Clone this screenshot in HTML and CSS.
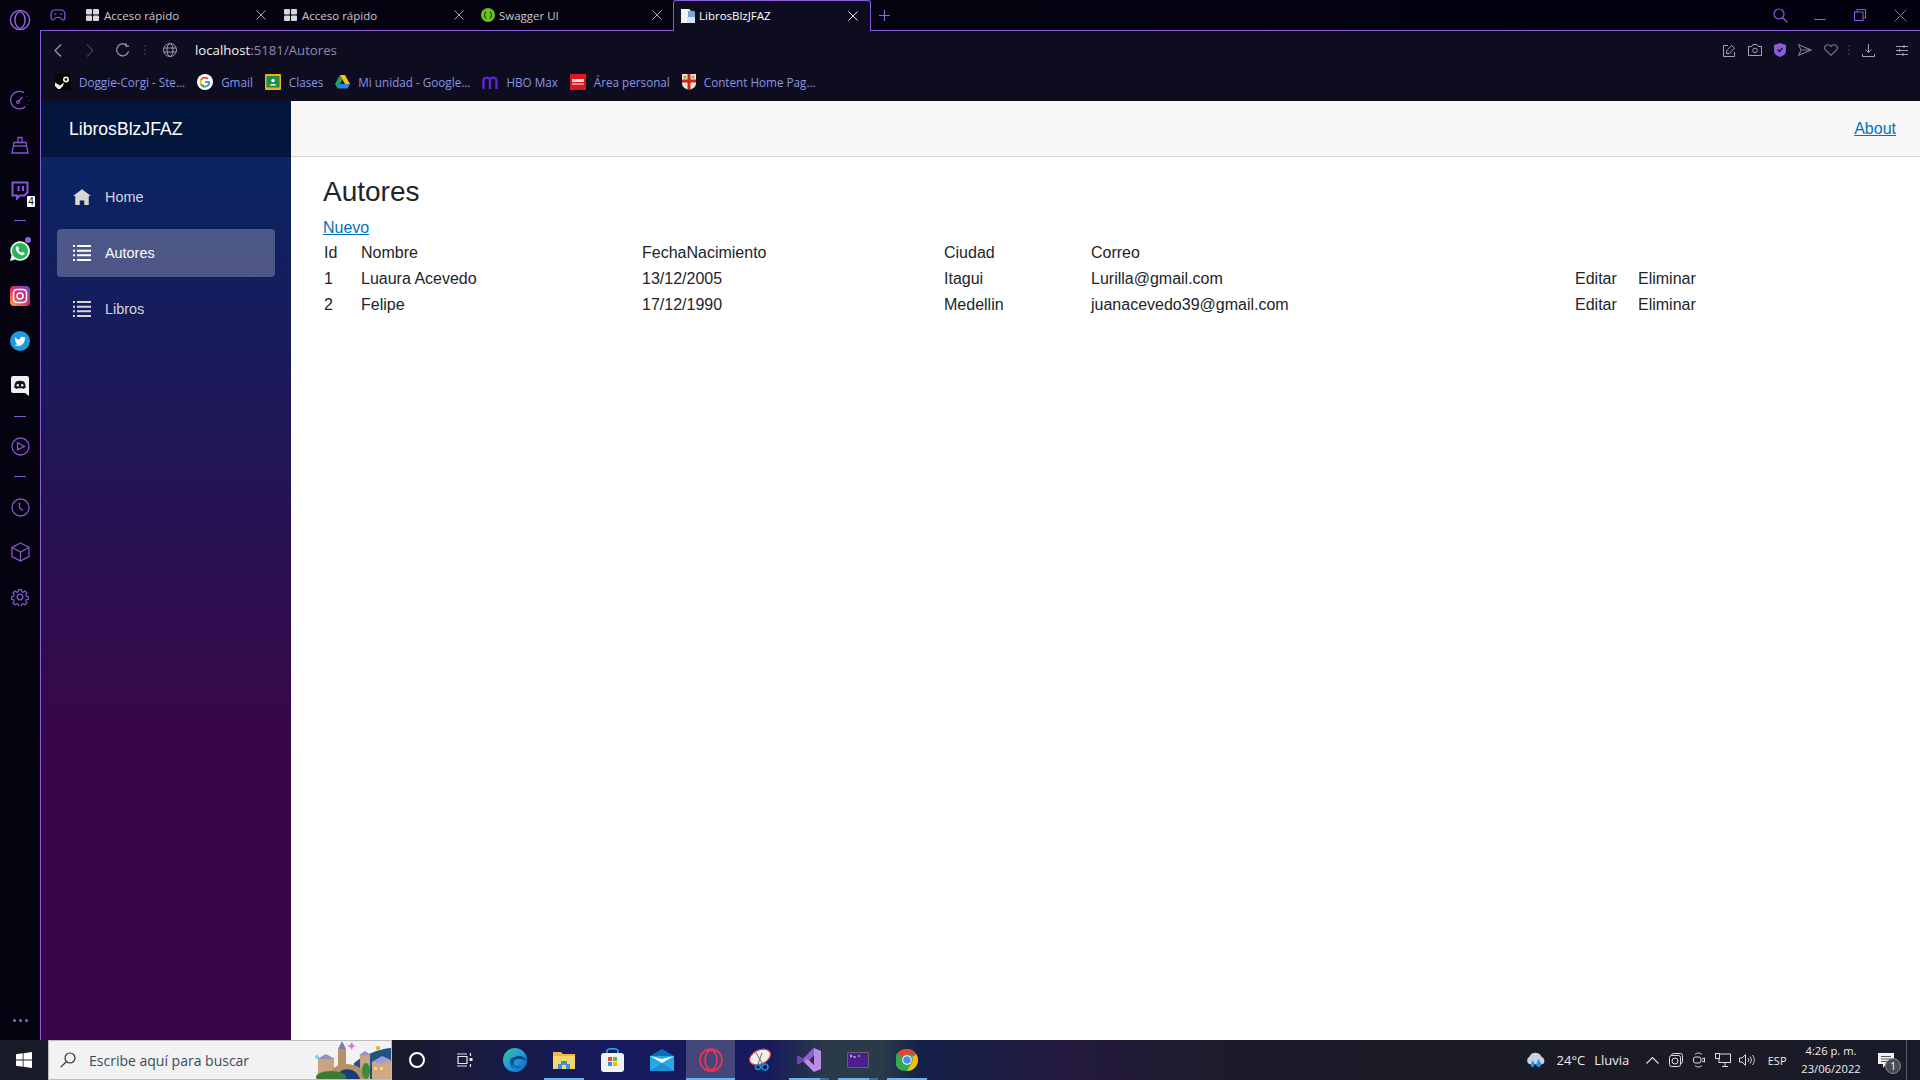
FILE: index.html
```html
<!DOCTYPE html>
<html lang="es">
<head>
<meta charset="utf-8">
<title>LibrosBlzJFAZ</title>
<link rel="stylesheet" href="styles.css">
</head>
<body>
<div class="desktop">
  <div class="window">
    <aside class="rail">
      <div class="rail-logo"><svg width="22" height="22" viewBox="0 0 22 22" fill="none" stroke="#8f63e0" stroke-width="1.4"><circle cx="11" cy="11" r="9.6"/><ellipse cx="11" cy="11" rx="5" ry="8.4"/></svg></div>
      <div class="rail-item"><svg width="20" height="20" viewBox="0 0 20 20" fill="none" stroke="#8457cf" stroke-width="1.3"><path d="M15.5 16.5A8.8 8.8 0 1 1 14 2.6"/><circle cx="8" cy="12" r="1.4"/><path d="M9 11l3.4-4"/><path d="M17 6v.6M18.5 10v.6M17.6 14v.6" stroke-width="1"/></svg></div>
      <div class="rail-item"><svg width="18" height="18" viewBox="0 0 18 18" fill="none" stroke="#8457cf" stroke-width="1.3"><path d="M7 1.5h4v5H7zM3 6.500h12l2 10.500H1z"/><path d="M3 10h12"/></svg></div>
      <div class="rail-item rail-badged"><svg width="18" height="19" viewBox="0 0 18 19"><path fill="none" stroke="#8457d6" stroke-width="2" d="M1.500 1.500h15v10l-3 3H9l-3 3v-3H1.500z"/><path fill="#8457d6" d="M6.500 5h2v5h-2zM11 5h2v5h-2z"/></svg><span class="rail-badge">4</span></div>
      <div class="rail-dash rail-dash-a"></div>
      <div class="rail-item rail-dot"><svg width="22" height="22" viewBox="0 0 22 22"><path fill="#e9f3e9" d="M1 21l1.500-5.400A9.800 9.800 0 1 1 6.300 19.500z"/><circle cx="11" cy="11" r="8" fill="#25b655"/><path fill="#fff" d="M7.500 6.500l1.500-.3 1.200 2.400-.9 1.100c.7 1.400 1.700 2.300 3 3l1.100-1 2.300 1.200-.2 1.400c-.6.8-1.600 1.100-2.700.9-3.100-.7-5.300-3.100-6-5.900-.2-1.100.1-2 .7-2.800z"/></svg><span class="rail-pip"></span></div>
      <div class="rail-item"><svg width="20" height="20" viewBox="0 0 20 20"><defs><linearGradient id="ig" x1="0" y1="1" x2="1" y2="0"><stop offset="0" stop-color="#f9b233"/><stop offset=".45" stop-color="#e1306c"/><stop offset="1" stop-color="#5b4fc9"/></linearGradient></defs><rect width="20" height="20" rx="4" fill="url(#ig)"/><rect x="3.500" y="3.500" width="13" height="13" rx="3.500" fill="none" stroke="#fff" stroke-width="1.500"/><circle cx="10" cy="10" r="3" fill="none" stroke="#fff" stroke-width="1.500"/></svg></div>
      <div class="rail-item"><svg width="20" height="20" viewBox="0 0 20 20"><circle cx="10" cy="10" r="10" fill="#1d9ae0"/><path fill="#fff" d="M15.500 6.800c-.4.200-.8.300-1.300.4.500-.3.800-.7 1-1.200-.4.300-.9.500-1.400.600a2.300 2.300 0 0 0-3.900 2.100c-1.900-.1-3.600-1-4.700-2.400-.6 1-.3 2.300.7 3-.4 0-.7-.1-1-.3 0 1.100.8 2 1.800 2.300-.3.100-.7.100-1 0 .3.900 1.100 1.600 2.100 1.600-1 .8-2.200 1.100-3.400 1 3.900 2.500 10.300.8 10.500-6.300.5-.3.9-.8 1.300-1.300z"/></svg></div>
      <div class="rail-item"><svg width="18" height="20" viewBox="0 0 18 20"><path fill="#efefef" d="M2 0h14a2 2 0 0 1 2 2v18l-4-3H2a2 2 0 0 1-2-2V2a2 2 0 0 1 2-2z"/><path fill="#14121f" d="M5 5.500c2.500-1 5.500-1 8 0 1.200 1.900 1.800 4 1.700 6-1 .8-2 1.200-3 1.400l-.7-1c-1.300.3-2.700.3-4 0l-.7 1c-1-.2-2-.6-3-1.400-.1-2 .5-4.100 1.700-6z"/><circle cx="6.800" cy="9.300" r="1.200" fill="#efefef"/><circle cx="11.200" cy="9.300" r="1.200" fill="#efefef"/></svg></div>
      <div class="rail-dash rail-dash-b"></div>
      <div class="rail-item rail-play"><svg width="19" height="19" viewBox="0 0 19 19" fill="none" stroke="#8457cf" stroke-width="1.300"><circle cx="9.500" cy="9.500" r="8.500"/><path d="M6.500 5.800l7 3.700-7 3.200z"/></svg></div>
      <div class="rail-dash rail-dash-c"></div>
      <div class="rail-item"><svg width="19" height="19" viewBox="0 0 19 19" fill="none" stroke="#8457cf" stroke-width="1.300"><circle cx="9.500" cy="9.500" r="8.500"/><path d="M8.500 4.500v5.500l3.500 2.500"/></svg></div>
      <div class="rail-item"><svg width="19" height="20" viewBox="0 0 19 20" fill="none" stroke="#8457cf" stroke-width="1.300"><path d="M9.500 1L18 5.500v9L9.500 19 1 14.500v-9zM1 5.500L9.500 10 18 5.500M9.500 10v9"/></svg></div>
      <div class="rail-item"><svg width="18" height="18" viewBox="0 0 18 18" fill="none" stroke="#8457cf" stroke-width="1.300"><circle cx="9" cy="9" r="2.800"/><path d="M7.500 1h3l.4 2.300 1.600.7 2-1.300 2 2.100L15.200 6.800l.6 1.500 2.200.4v2.800l-2.200.4-.6 1.500 1.300 2-2 2-2-1.300-1.600.7-.4 2.200h-3l-.4-2.200-1.600-.7-2 1.300-2-2 1.300-2-.6-1.500L0 11.500V8.700l2.200-.4.600-1.500-1.300-2 2-2.100 2 1.300 1.600-.7z" transform="translate(.6 .6) scale(.93)"/></svg></div>
      <div class="rail-more"><i></i><i></i><i></i></div>
    </aside>
    <div class="browser">
      <div class="tabbar">
        <div class="tab-game"><svg width="16" height="12" viewBox="0 0 16 12" fill="none" stroke="#8f63e0" stroke-width="1.200"><path d="M4 1h8c2 0 3 2.500 3 6 0 2.500-.8 4-2 4-1.500 0-2-2.500-3.500-2.500h-3C5 8.500 4.500 11 3 11 1.800 11 1 9.500 1 7c0-3.500 1-6 3-6z"/><path d="M4 5h2.500M10 5h2"/></svg></div>
        <div class="tab">
          <svg class="fav" width="13" height="12" viewBox="0 0 13 12" fill="#d8d8d8"><rect width="6" height="5.500" rx="1"/><rect x="7" width="6" height="5.500" rx="1"/><rect y="6.500" width="6" height="5.500" rx="1"/><rect x="7" y="6.500" width="6" height="5.500" rx="1"/></svg>
          <span class="tab-title">Acceso rápido</span>
          <svg class="tab-x" width="10" height="10" viewBox="0 0 10 10" stroke="#a8a8ae" fill="none"><path d="M.5.5l9 9M9.500.5l-9 9"/></svg>
        </div>
        <div class="tab">
          <svg class="fav" width="13" height="12" viewBox="0 0 13 12" fill="#d8d8d8"><rect width="6" height="5.500" rx="1"/><rect x="7" width="6" height="5.500" rx="1"/><rect y="6.500" width="6" height="5.500" rx="1"/><rect x="7" y="6.500" width="6" height="5.500" rx="1"/></svg>
          <span class="tab-title">Acceso rápido</span>
          <svg class="tab-x" width="10" height="10" viewBox="0 0 10 10" stroke="#a8a8ae" fill="none"><path d="M.5.5l9 9M9.500.5l-9 9"/></svg>
        </div>
        <div class="tab tab-swagger">
          <svg class="fav" width="14" height="14" viewBox="0 0 14 14"><circle cx="7" cy="7" r="7" fill="#6cc01e"/><path d="M5 3.500C3.800 3.500 4.300 6.500 3.300 7c1 .5.500 3.500 1.700 3.500M9 3.500c1.200 0 .7 3 1.700 3.500-1 .5-.5 3.500-1.700 3.500" fill="none" stroke="#13280a" stroke-width="1"/></svg>
          <span class="tab-title">Swagger UI</span>
          <svg class="tab-x" width="10" height="10" viewBox="0 0 10 10" stroke="#a8a8ae" fill="none"><path d="M.5.5l9 9M9.500.5l-9 9"/></svg>
        </div>
        <div class="tab tab-active">
          <svg class="fav" width="16" height="16" viewBox="0 0 16 16"><path fill="#eef3f8" d="M1 1h8l2 2v12H1z"/><path fill="#7fa6d8" d="M8 3h6l1 1v8H8z"/><path fill="#d6e2f0" d="M7 9h8v6H7z"/></svg>
          <span class="tab-title">LibrosBlzJFAZ</span>
          <svg class="tab-x" width="10" height="10" viewBox="0 0 10 10" stroke="#e8e8e8" fill="none"><path d="M.5.5l9 9M9.500.5l-9 9"/></svg>
        </div>
        <svg class="tab-plus" width="11" height="11" viewBox="0 0 11 11" stroke="#8f63e0" fill="none" stroke-width="1.200"><path d="M5.500 0v11M0 5.500h11"/></svg>
        <div class="win-ctrl">
          <svg class="win-search" width="15" height="15" viewBox="0 0 15 15" fill="none" stroke="#8a5ddb" stroke-width="1.200"><circle cx="6" cy="6" r="5"/><path d="M9.500 9.500l5 5"/></svg>
          <svg width="12" height="12" viewBox="0 0 12 12" fill="none" stroke="#8a5ddb"><path d="M0 10.500h12"/></svg>
          <svg width="12" height="12" viewBox="0 0 12 12" fill="none" stroke="#8a5ddb"><rect x=".5" y="3" width="8.500" height="8.500"/><path d="M3 3V.5h8.500V9H9"/></svg>
          <svg width="13" height="13" viewBox="0 0 13 13" fill="none" stroke="#8a5ddb"><path d="M.5.5l12 12M12.500.5l-12 12"/></svg>
        </div>
      </div>
      <div class="toolbar">
        <div class="navrow">
          <svg class="nav-back" width="8" height="13" viewBox="0 0 8 13" fill="none" stroke="#9e99bb" stroke-width="1.200"><path d="M7 .5L1 6.500l6 6"/></svg>
          <svg class="nav-fwd" width="8" height="13" viewBox="0 0 8 13" fill="none" stroke="#3f3c56" stroke-width="1.200"><path d="M1 .5l6 6-6 6"/></svg>
          <svg class="nav-reload" width="14" height="14" viewBox="0 0 14 14" fill="none" stroke="#9e99bb" stroke-width="1.200"><path d="M12.500 8.500A6 6 0 1 1 10.500 2.200"/><path d="M10 .2v3h3" /></svg>
          <span class="nav-sep"></span>
          <svg class="nav-globe" width="14" height="14" viewBox="0 0 14 14" fill="none" stroke="#9e99bb"><circle cx="7" cy="7" r="6.500"/><ellipse cx="7" cy="7" rx="3" ry="6.500"/><path d="M1 5h12M1 9h12"/></svg>
          <div class="url"><b>localhost</b>:5181/Autores</div>
          <div class="nav-tools">
            <svg width="13" height="13" viewBox="0 0 13 13" fill="none" stroke="#a49fc4"><path d="M5 1.500H.5v11h11V8"/><path d="M3.500 9.500V7l5-5.500 3 2.500-5 5.500z"/></svg>
            <svg width="14" height="12" viewBox="0 0 14 12" fill="none" stroke="#a49fc4"><path d="M.5 2.500h3.300L5 .5h4l1.200 2h3.300v9H.5z"/><circle cx="7" cy="6.500" r="2.300"/></svg>
            <svg width="12" height="14" viewBox="0 0 12 14"><path fill="#8a5ddb" d="M6 0l6 2v6c0 3-3 5-6 6-3-1-6-3-6-6V2z"/><path d="M3.500 6.500L5.500 8.500 8.500 5" fill="none" stroke="#14112a" stroke-width="1.300"/></svg>
            <svg width="14" height="12" viewBox="0 0 14 12" fill="none" stroke="#7c7899" stroke-width="1.100"><path d="M.7.700L13 6 .7 11.300 3 6zM3 6h10"/></svg>
            <svg width="14" height="12" viewBox="0 0 14 12" fill="none" stroke="#7c7899" stroke-width="1.100"><path d="M7 11.300L1.400 6C-.3 3.800 1.200.7 3.800.7 5.200.7 6.400 1.500 7 2.500 7.600 1.500 8.800.7 10.200.7c2.600 0 4.100 3.100 2.400 5.300z"/></svg>
            <span class="nav-sep nav-sep-r"></span>
            <svg class="tool-dl" width="13" height="13" viewBox="0 0 13 13" fill="none" stroke="#a49fc4"><path d="M6.500 0v8M3.500 5.500l3 3 3-3M.5 10v2.500h12V10"/></svg>
            <svg class="tool-set" width="12" height="11" viewBox="0 0 12 11" fill="none" stroke="#a49fc4"><path d="M0 1.500h12M0 5.500h12M0 9.500h12M8 0v3M3.500 4v3M7 8v3"/></svg>
          </div>
        </div>
        <div class="bookmarks">
          <a class="bm"><svg width="16" height="16" viewBox="0 0 16 16"><rect width="16" height="16" fill="#050505"/><circle cx="11" cy="5.500" r="3" fill="#f2f2f2"/><circle cx="11" cy="5.500" r="1.300" fill="#050505"/><path d="M0 8.500l5 3 4-3-1 3.500-3 3H3L0 12z" fill="#f2f2f2"/></svg><span>Doggie-Corgi - Ste...</span></a>
          <a class="bm"><svg width="16" height="16" viewBox="0 0 16 16"><circle cx="8" cy="8" r="8" fill="#fff"/><path d="M12.500 8H8" stroke="#4285f4" stroke-width="1.800"/><path d="M12.500 8A4.500 4.500 0 0 1 9.500 12.300" fill="none" stroke="#4285f4" stroke-width="1.800"/><path d="M9.500 12.300A4.500 4.500 0 0 1 4 10" fill="none" stroke="#34a853" stroke-width="1.800"/><path d="M4 10A4.500 4.500 0 0 1 4 6" fill="none" stroke="#fbbc05" stroke-width="1.800"/><path d="M4 6a4.500 4.500 0 0 1 7-1.200" fill="none" stroke="#ea4335" stroke-width="1.800"/></svg><span>Gmail</span></a>
          <a class="bm"><svg width="16" height="16" viewBox="0 0 16 16"><rect width="16" height="16" rx="1" fill="#f4b400"/><rect x="1.500" y="2" width="13" height="11.500" fill="#1e8e4e"/><circle cx="8" cy="6.500" r="1.700" fill="#fff"/><path d="M4.500 11.500c.5-2 6.500-2 7 0z" fill="#fff"/></svg><span>Clases</span></a>
          <a class="bm"><svg width="15" height="14" viewBox="0 0 15 14"><path fill="#1ea362" d="M5 0L0 9l2.500 4.500L7.500 4.500z"/><path fill="#ffc107" d="M5 0h5l5 9h-5z"/><path fill="#2684fc" d="M2.500 13.500L5 9h10l-2.500 4.500z"/></svg><span>Mi unidad - Google...</span></a>
          <a class="bm"><svg width="16" height="13" viewBox="0 0 16 13" fill="none" stroke="#5b25d6" stroke-width="2.400"><path d="M1.500 13V5c0-4.500 6.500-4.500 6.500 0v8M8 5c0-4.500 6.500-4.500 6.500 0v8"/></svg><span>HBO Max</span></a>
          <a class="bm"><svg width="16" height="16" viewBox="0 0 16 16"><rect width="16" height="16" fill="#d81920"/><rect x="2" y="5" width="12" height="3" fill="#fff" opacity=".85"/><rect x="2" y="9" width="12" height="2" fill="#fff" opacity=".5"/></svg><span>Área personal</span></a>
          <a class="bm"><svg width="14" height="16" viewBox="0 0 14 16"><path fill="#f3e6d6" d="M0 0h14v9c0 4-3.500 6-7 7-3.500-1-7-3-7-7z"/><path fill="#c8261c" d="M5.500 0h3v16h-3zM0 5.500h14v3H0z"/><rect x="1.500" y="1.500" width="3" height="3" fill="#d89a3a"/><rect x="9.500" y="1.500" width="3" height="3" fill="#d89a3a"/></svg><span>Content Home Pag...</span></a>
        </div>
      </div>
      <div class="app">
        <nav class="sidebar">
          <div class="brand">LibrosBlzJFAZ</div>
          <ul class="menu">
            <li class="menu-item"><svg width="18" height="16" viewBox="0 0 8 7"><path fill="currentColor" d="M4 0L0 3h1v4h2V5h2v2h2V3h1z"/></svg><span>Home</span></li>
            <li class="menu-item menu-active"><svg width="18" height="16" viewBox="0 0 18 16" fill="currentColor"><path d="M0 0h2v2H0zM4 0h14v2H4zM0 4.700h2v2H0zM4 4.700h14v2H4zM0 9.300h2v2H0zM4 9.300h14v2H4zM0 14h2v2H0zM4 14h14v2H4z"/></svg><span>Autores</span></li>
            <li class="menu-item"><svg width="18" height="16" viewBox="0 0 18 16" fill="currentColor"><path d="M0 0h2v2H0zM4 0h14v2H4zM0 4.700h2v2H0zM4 4.700h14v2H4zM0 9.300h2v2H0zM4 9.300h14v2H4zM0 14h2v2H0zM4 14h14v2H4z"/></svg><span>Libros</span></li>
          </ul>
        </nav>
        <main class="main">
          <header class="topbar"><a class="link" href="#">About</a></header>
          <section class="content">
            <h1 class="title">Autores</h1>
            <a class="link" href="#">Nuevo</a>
            <table class="grid">
              <colgroup><col class="c-id"><col class="c-name"><col class="c-date"><col class="c-city"><col class="c-mail"><col class="c-edit"><col class="c-del"></colgroup>
              <thead><tr><th>Id</th><th>Nombre</th><th>FechaNacimiento</th><th>Ciudad</th><th>Correo</th><th></th><th></th></tr></thead>
              <tbody>
                <tr><td>1</td><td>Luaura Acevedo</td><td>13/12/2005</td><td>Itagui</td><td>Lurilla@gmail.com</td><td>Editar</td><td>Eliminar</td></tr>
                <tr><td>2</td><td>Felipe</td><td>17/12/1990</td><td>Medellin</td><td>juanacevedo39@gmail.com</td><td>Editar</td><td>Eliminar</td></tr>
              </tbody>
            </table>
          </section>
        </main>
      </div>
    </div>
  </div>
  <footer class="taskbar">
    <div class="start"><svg width="16" height="16" viewBox="0 0 16 16" fill="#fff"><path d="M0 2.300L6.700 1.300v6.200H0zM7.500 1.200L16 0v7.500H7.500zM0 8.500h6.700v6.200L0 13.700zM7.500 8.500H16V16l-8.500-1.200z"/></svg></div>
    <div class="search">
      <svg width="16" height="16" viewBox="0 0 16 16" fill="none" stroke="#333" stroke-width="1.200"><circle cx="10" cy="6" r="5"/><path d="M6.500 9.500L.8 15.200"/></svg>
      <span class="search-text">Escribe aquí para buscar</span>
      <svg class="search-art" width="77" height="38" viewBox="0 0 77 38"><path d="M40 22c10-8 24-14 37-15v31H40z" fill="#20557f"/><rect x="4" y="18" width="16" height="20" fill="#c7a47e"/><path d="M3 18l9-5 9 5z" fill="#9a8fc4"/><rect x="24" y="8" width="8" height="30" fill="#b98f66"/><path d="M24 8l4-8 4 8z" fill="#7d78ae"/><rect x="46" y="14" width="10" height="24" fill="#c7a47e"/><path d="M45 14l6-4 6 4z" fill="#9a8fc4"/><path d="M14 38c2-20 34-20 40 0z" fill="#b98f66"/><path d="M22 38c2-13 20-13 24 0z" fill="#123f78"/><path d="M58 38V21l10-5 9 4v18z" fill="#cfa983"/><path d="M58 21l10-6 9 4-9 4z" fill="#a29ad8"/><ellipse cx="17" cy="36" rx="15" ry="6" fill="#3d7a35"/><ellipse cx="52" cy="30" rx="4" ry="8" fill="#3d8a3a"/><path d="M36 4l2-3 1 3 3 1-3 1-1 3-2-3-3-1z" fill="#e36bd8"/><circle cx="64" cy="7" r="2" fill="#f3a81c"/><circle cx="3" cy="16" r="2" fill="#6fd7ea"/><rect x="60" y="26" width="3" height="3" fill="#f6d878"/><rect x="66" y="26" width="3" height="3" fill="#f6d878"/></svg>
    </div>
    <div class="ticon"><svg width="16" height="16" viewBox="0 0 16 16" fill="none" stroke="#fff" stroke-width="2"><circle cx="8" cy="8" r="7"/></svg></div>
    <div class="ticon"><svg class="tv-icon" width="16" height="16" viewBox="0 0 16 16" fill="none" stroke="#e8e8e8" stroke-width="1.200"><path d="M0 2h10M0 14h10M1 4.500h9v7H1z"/><path d="M13.500 1v3M13.500 12v3"/><rect x="12.500" y="6" width="3" height="3" fill="#e8e8e8" stroke="none"/></svg></div>
    <div class="ticon"><svg width="24" height="24" viewBox="0 0 24 24"><defs><linearGradient id="ed" x1="0" y1="0" x2="1" y2="1"><stop offset="0" stop-color="#37c58a"/><stop offset=".5" stop-color="#1f9ddb"/><stop offset="1" stop-color="#1162b5"/></linearGradient></defs><circle cx="12" cy="12" r="12" fill="url(#ed)"/><path d="M23 13c-1-5-7-6-11-4-4 2-4 8 0 10 3 1.500 5 0 6-1-5 2-9-1-7-5 2-3 8-3 12 0z" fill="#0c3f7e"/><path d="M9 13c0-3 3-5 6-4-3-1-8 0-8 5 0 3 2 6 4 7-2-2-2-5-2-8z" fill="#0d4f9c"/></svg></div>
    <div class="ticon ticon-open"><svg width="22" height="18" viewBox="0 0 22 18"><path d="M0 1h8l2 2h12v15H0z" fill="#e8b93f"/><rect y="5" width="22" height="13" fill="#f7d56a"/><path d="M5 18v-5h3v-3h6v3h3v5z" fill="#3d93d6"/><rect x="9" y="14" width="4" height="4" fill="#f7d56a"/></svg></div>
    <div class="ticon"><svg width="23" height="24" viewBox="0 0 23 24"><path d="M6 7V3c0-3 11-3 11 0v4" fill="none" stroke="#29a8e6" stroke-width="1.600"/><rect y="5" width="23" height="19" rx="3" fill="#f3f3f3"/><rect x="7" y="9" width="4" height="4" fill="#e8452c"/><rect x="12" y="9" width="4" height="4" fill="#6bb72b"/><rect x="7" y="14" width="4" height="4" fill="#1f9ae0"/><rect x="12" y="14" width="4" height="4" fill="#f9b612"/></svg></div>
    <div class="ticon"><svg width="24" height="22" viewBox="0 0 24 22"><path d="M12 0l12 7v15H0V7z" fill="#0a6fc2"/><rect y="7" width="24" height="15" fill="#27a9e8"/><path d="M0 7l12 7 12-7-12 3z" fill="#fff"/><path d="M0 22l12-8 12 8z" fill="#1b8fd6"/></svg></div>
    <div class="ticon ticon-active"><svg width="24" height="24" viewBox="0 0 24 24" fill="none" stroke="#f0344f" stroke-width="1.700"><circle cx="12" cy="12" r="11"/><ellipse cx="12" cy="12" rx="6" ry="9.800"/></svg></div>
    <div class="ticon"><svg width="24" height="24" viewBox="0 0 24 24"><ellipse cx="12" cy="9" rx="11" ry="7" fill="#f3efef" stroke="#d3414f" stroke-width="1.200" transform="rotate(-25 12 9)"/><path d="M8 5l8 13M14 5l-4 11" stroke="#666" fill="none"/><circle cx="17" cy="19" r="3" fill="none" stroke="#1c8fd0" stroke-width="1.600"/><circle cx="10" cy="19" r="2.500" fill="none" stroke="#1c8fd0" stroke-width="1.600"/></svg></div>
    <div class="ticon ticon-open ticon-multi"><svg width="24" height="24" viewBox="0 0 24 24"><path d="M17 0l7 3v18l-7 3L6 13 2 16 0 15V9l2-1 4 3zM17 7l-5 5 5 5z" fill="#b98ce8"/><path d="M0 9l2-1 4 3 3 2-3 0-4 3-2-1z" fill="#6d3fb0"/><path d="M17 0v7l-5 5-6-1z" fill="#8f5fd2"/></svg></div>
    <div class="ticon ticon-open ticon-multi"><svg width="22" height="16" viewBox="0 0 22 16"><rect width="22" height="16" rx="1" fill="#5f6068"/><rect x="1" y="1" width="20" height="14" fill="#4b1f8c"/><path d="M3 3l2 1-2 1M6 5h3M11 4h2" stroke="#d8d0ea" fill="none"/></svg></div>
    <div class="ticon ticon-open"><svg width="22" height="22" viewBox="0 0 22 22"><circle cx="11" cy="11" r="11" fill="#34a853"/><path d="M11 0a11 11 0 0 1 9.500 5.500H11A5.500 5.500 0 0 0 5.800 9L2 3.500A11 11 0 0 1 11 0z" fill="#ea4335"/><path d="M2 3.500L6.500 14A5.500 5.500 0 0 0 11 16.500L7 22A11 11 0 0 1 2 3.500z" fill="#34a853"/><path d="M20.500 5.500A11 11 0 0 1 11 22l4.500-8A5.500 5.500 0 0 0 16 8z" fill="#fbbc05"/><circle cx="11" cy="11" r="4.800" fill="#fff"/><circle cx="11" cy="11" r="3.800" fill="#4c8bf5"/></svg></div>
    <div class="tray">
      <svg width="22" height="19" viewBox="0 0 20 17"><path d="M4 12a4 4 0 0 1 0-7 6 6 0 0 1 11 0 4 4 0 0 1 1 7z" fill="#c4d4e6"/><path d="M7 8l-2 5 2 2 2-3zM12 7l-2 6 3 2 2-3z" fill="#2f8fe0"/></svg>
      <span class="tray-temp">24°C</span>
      <span class="tray-cond">Lluvia</span>
      <svg class="tray-up" width="13" height="7" viewBox="0 0 13 7" fill="none" stroke="#e4e4e4" stroke-width="1.100"><path d="M.5 6.500l6-6 6 6"/></svg>
      <svg class="tray-i" width="14" height="14" viewBox="0 0 14 14" fill="none" stroke="#dcdcdc"><rect x="2.500" y=".5" width="11" height="10" rx="2"/><rect x=".5" y="2.500" width="11" height="11" rx="2" fill="#1a1b29"/><circle cx="6" cy="8" r="3"/></svg>
      <svg class="tray-i" width="12" height="16" viewBox="0 0 12 16" fill="none" stroke="#dcdcdc"><path d="M2 2.500c2-2 5-2 7 0M2 13.500c2 2 5 2 7 0"/><rect x=".5" y="5" width="7.500" height="6" rx="2"/><path d="M9 7l2.500-1v4L9 9"/></svg>
      <svg class="tray-i tray-net" width="16" height="14" viewBox="0 0 16 14" fill="none" stroke="#dcdcdc"><rect x="4" y="1" width="11.500" height="8.500"/><rect x=".5" y=".5" width="4" height="5" fill="#1a1b29"/><path d="M10 9.500V13M7 13.500h6"/></svg>
      <svg class="tray-i tray-vol" width="16" height="12" viewBox="0 0 16 12" fill="none" stroke="#dcdcdc"><path d="M.5 4h2.500L6.500.7v10.600L3 8H.5z"/><path d="M9 4c1 1 1 3 0 4M11 2.500c1.800 2 1.800 5 0 7M13.500 1c2.400 3 2.400 7 0 10" stroke-width=".9"/></svg>
      <span class="tray-lang">ESP</span>
      <div class="clock"><span>4:26 p. m.</span><span>23/06/2022</span></div>
      <div class="notify">
        <svg width="16" height="15" viewBox="0 0 16 15"><path d="M0 0h16v11h-8l-3 4v-4H0z" fill="#f2f2f2"/><path d="M3 3.500h10M3 6h10M3 8.500h7" stroke="#555"/></svg>
        <span class="notify-badge">1</span>
      </div>
      <span class="show-desktop"></span>
    </div>
  </footer>
</div>
</body>
</html>
```

FILE: styles.css
```css
* { box-sizing: border-box; }
html, body { margin: 0; height: 100%; }
body { font-family: "Liberation Sans", Arial, sans-serif; font-size: 16px; color: #212529; overflow: hidden; }
svg { display: block; flex: none; }

.desktop { display: flex; flex-direction: column; width: 1920px; height: 1080px; }
.window { flex: 1; display: flex; min-height: 0; }

/* left rail */
.rail { width: 40px; flex: none; background: #05030f; display: flex; flex-direction: column; align-items: center; }
.rail-logo { height: 40px; margin-bottom: 37.5px; display: flex; align-items: center; justify-content: center; }
.rail-item { height: 45px; width: 40px; display: flex; align-items: center; justify-content: center; position: relative; }
.rail-badge { position: absolute; left: 27px; top: 28px; width: 8px; height: 11px; background: #fff; color: #111; font: 10px/11px "Liberation Sans", sans-serif; text-align: center; border-radius: 1px; }
.rail-pip { position: absolute; left: 25px; top: 8px; width: 6px; height: 6px; border-radius: 50%; background: #8f63e0; }
.rail-dash { width: 12px; display: flex; align-items: center; }
.rail-dash::before { content: ""; display: block; width: 12px; height: 1px; background: #8457cf; }
.rail-dash-a { height: 16px; }
.rail-dash-b { height: 15px; }
.rail-dash-c { height: 16px; }
.rail-more { margin-top: auto; height: 20px; margin-bottom: 10px; display: flex; gap: 3px; align-items: center; }
.rail-more i { width: 3px; height: 3px; border-radius: 50%; background: #8f63e0; }

/* browser */
.browser { flex: 1; min-width: 0; display: flex; flex-direction: column; }
.tabbar { height: 31px; flex: none; display: flex; align-items: center; background: linear-gradient(90deg, #05030f, #020110); border-bottom: 1px solid #8a5ddb; font-family: "Open Sans", sans-serif; font-size: 11.500px; }
.tab-game { width: 40px; height: 100%; display: flex; align-items: center; padding-left: 10px; }
.tab { width: 198px; height: 30px; display: flex; align-items: center; padding: 0 12px 0 6px; color: #c9c9cc; }
.tab .fav { margin-right: 5px; }
.tab-title { flex: 1; white-space: nowrap; }
.tab-swagger { padding-left: 5px; }
.tab-swagger .fav { margin-right: 4px; }
.tab-active { height: 31px; margin: 0 0 -1px -1px; align-self: flex-start; background: #0e0c1f; color: #fff; border: 1px solid #8a5ddb; border-bottom: 0; border-radius: 3px 3px 0 0; padding-left: 6px; padding-bottom: 1px; }
.tab-active .fav { margin-right: 3px; }
.tab-plus { margin-left: 8px; }
.win-ctrl { margin-left: auto; display: flex; align-items: center; gap: 28px; padding-right: 13px; }
.win-search { margin-right: -1.500px; }

.toolbar { height: 70px; flex: none; background: #0e0c1f; border-left: 1px solid #8a5ddb; display: flex; flex-direction: column; }
.navrow { height: 38px; display: flex; align-items: center; padding-left: 13px; }
.nav-fwd { margin-left: 24px; }
.nav-reload { margin-left: 22px; }
.nav-sep { width: 2px; height: 10px; margin-left: 14px; background: repeating-linear-gradient(#2b2844 0 2px, transparent 2px 4px); }
.nav-globe { margin-left: 17px; }
.url { margin-left: 18px; color: #8f8bb0; font: 13.200px "Open Sans", sans-serif; }
.url b { font-weight: 400; color: #f2f2f2; }
.nav-tools { margin-left: auto; display: flex; align-items: center; gap: 12px; padding-right: 12px; }
.nav-sep-r { margin-left: -2px; }
.tool-set { margin-left: 9px; }

.bookmarks { flex: 1; display: flex; align-items: center; gap: 12px; padding: 0 0 6px 14px; font: 11.700px "Open Sans", sans-serif; color: #8a95e6; }
.bm { display: flex; align-items: center; gap: 8px; white-space: nowrap; }

/* app */
.app { flex: 1; min-height: 0; display: flex; border-left: 1px solid #8a5ddb; }
.sidebar { width: 250px; flex: none; background-image: linear-gradient(180deg, #052767 0%, #3a0647 70%); }
.brand { height: 56px; background: rgba(0, 0, 0, .4); color: #fff; font-size: 17.600px; line-height: 56px; padding-left: 28px; }
.menu { list-style: none; margin: 0; padding: 16px 16px 0; display: flex; flex-direction: column; gap: 8px; }
.menu-item { height: 48px; border-radius: 4px; display: flex; align-items: center; gap: 14px; padding-left: 16px; color: #d7d7d7; font-size: 14.400px; }
.menu-active { background: rgba(255, 255, 255, .25); color: #fff; }

.main { flex: 1; min-width: 0; display: flex; flex-direction: column; background: #fff; }
.topbar { height: 56px; flex: none; background: #f7f7f7; border-bottom: 1px solid #d6d5d5; display: flex; align-items: center; justify-content: flex-end; padding: 1px 24px 0; }
.link { color: #0071c1; text-decoration: underline; line-height: 24px; }
.content { padding: 18px 32px 0; }
.title { font-size: 28px; font-weight: 400; line-height: 33.600px; margin: 0 0 7px; }
.grid { border-collapse: separate; border-spacing: 0; table-layout: fixed; width: 1565px; }
.grid th, .grid td { font-weight: 400; text-align: left; padding: 1px; line-height: 24px; white-space: nowrap; }
.c-id { width: 37px; }
.c-name { width: 281px; }
.c-date { width: 302px; }
.c-city { width: 147px; }
.c-mail { width: 484px; }
.c-edit { width: 63px; }

/* taskbar */
.taskbar { height: 40px; flex: none; display: flex; align-items: center; background: linear-gradient(90deg, #1a1b29 0%, #1a1b2e 21%, #171a5c 31%, #171a5c 40%, #2a3a48 43%, #2a3a48 46%, #152048 48%, #241a40 55%, #1f1a2c 63%, #1a1b24 78%, #1a1b29 100%); }
.start { width: 48px; height: 100%; display: flex; align-items: center; justify-content: center; }
.search { width: 344px; height: 100%; background: #f2f2f2; border: 1px solid #bdbdbd; display: flex; align-items: center; padding-left: 11px; position: relative; overflow: hidden; }
.search-text { margin-left: 13px; font: 14px "Open Sans", sans-serif; color: #3a4a5c; white-space: nowrap; }
.search-art { margin-left: auto; align-self: flex-end; }
.ticon { width: 49px; height: 100%; display: flex; align-items: center; justify-content: center; position: relative; }
.tv-icon { margin-right: 2px; }
.ticon-open::after, .ticon-active::after { content: ""; position: absolute; left: 4.500px; right: 4.500px; bottom: 0; height: 2px; background: #6db3ea; }
.ticon-multi::after { background: linear-gradient(90deg, #6db3ea 0 78%, #3d6f9e 78% 100%); }
.ticon-active { background: rgba(255, 255, 255, .2); }
.ticon-active::after { left: 0; right: 0; }
.tray { margin-left: auto; display: flex; align-items: center; height: 100%; color: #ececec; font: 13px "Open Sans", sans-serif; }
.tray-temp { margin-left: 10px; }
.tray-cond { margin-left: 9px; }
.tray-up { margin-left: 17px; }
.tray-i { margin-left: 10px; }
.tray-vol { margin-left: 8px; }
.tray-lang { margin-left: 12.500px; font-size: 11px; }
.clock { margin-left: 14.500px; width: 60px; display: flex; flex-direction: column; align-items: center; font-size: 11.200px; line-height: 18px; white-space: nowrap; }
.notify { width: 42px; margin-left: 4px; height: 100%; display: flex; align-items: center; justify-content: center; position: relative; }
.notify-badge { position: absolute; left: 20px; top: 18px; width: 16px; height: 16px; border-radius: 50%; background: #4b4b52; border: 1px solid #888; color: #fff; font-size: 10px; line-height: 14px; text-align: center; }
.show-desktop { width: 12px; height: 100%; border-left: 1px solid #5a5b68; margin-left: -1px; margin-right: 2px; }
```
